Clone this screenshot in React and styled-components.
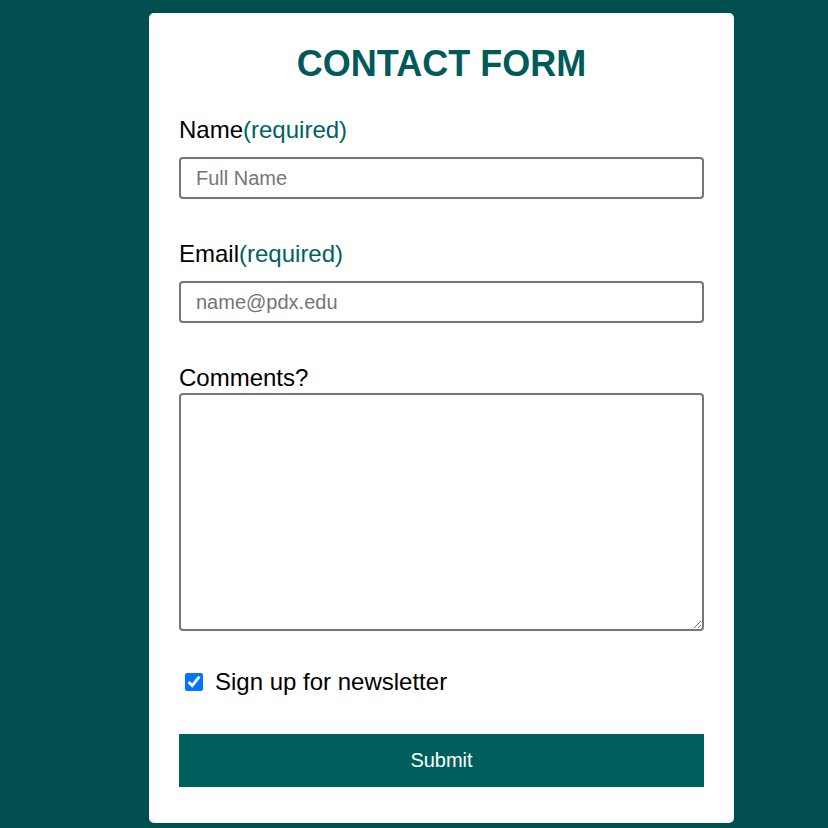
import React from 'react'
import styled, { createGlobalStyle } from 'styled-components'

const GlobalStyle = createGlobalStyle`
  html, body {
    margin: 0;
    padding: 0;
    background: #004f4f;
    font-family: "Liberation Sans", Arial, sans-serif;
  }
`

const Page = styled.div`
  min-height: 828px;
  padding: 13px 0 5px 149px;
  box-sizing: border-box;
`

const Card = styled.form`
  width: 585px;
  box-sizing: border-box;
  background: #fff;
  border-radius: 5px;
  padding: 30px 30px 36px;
  display: flex;
  flex-direction: column;
`

const Title = styled.h1`
  margin: 0 0 31px;
  text-align: center;
  font-size: 36px;
  font-weight: bold;
  color: #005a5a;
  line-height: normal;
`

const Field = styled.div`
  display: flex;
  flex-direction: column;
  margin-bottom: ${(p) => p.gap || 0}px;
`

const Label = styled.label`
  font-size: 24px;
  color: #000;
  line-height: normal;
  margin-bottom: ${(p) => (p.tight ? 1 : 13)}px;
`

const Required = styled.span`
  color: #006262;
`

const Input = styled.input`
  height: 42px;
  box-sizing: border-box;
  border: 2px solid #767676;
  border-radius: 4px;
  padding: 0 15px;
  font-family: inherit;
  font-size: 20px;
  color: #000;

  &::placeholder {
    color: #757575;
  }
`

const TextArea = styled.textarea`
  height: 238px;
  box-sizing: border-box;
  border: 2px solid #767676;
  border-radius: 4px;
  padding: 8px 15px;
  font-family: inherit;
  font-size: 20px;
  margin: 0;
`

const CheckRow = styled.label`
  display: flex;
  align-items: center;
  font-size: 24px;
  line-height: normal;
  margin-bottom: 38px;
`

const Check = styled.input`
  width: 18px;
  height: 18px;
  margin: 0 12px 0 6px;
`

const Submit = styled.button`
  height: 53px;
  border: none;
  background: #005f5c;
  color: #fff;
  font-family: inherit;
  font-size: 20px;
  cursor: pointer;
`

export default function App() {
  return (
    <Page>
      <GlobalStyle />
      <Card onSubmit={(e) => e.preventDefault()}>
        <Title>CONTACT FORM</Title>
        <Field gap={41}>
          <Label htmlFor="name">
            Name<Required>(required)</Required>
          </Label>
          <Input id="name" type="text" placeholder="Full Name" />
        </Field>
        <Field gap={41}>
          <Label htmlFor="email">
            Email<Required>(required)</Required>
          </Label>
          <Input id="email" type="email" placeholder="name@pdx.edu" />
        </Field>
        <Field gap={37}>
          <Label htmlFor="comments" tight>
            Comments?
          </Label>
          <TextArea id="comments" />
        </Field>
        <CheckRow>
          <Check type="checkbox" defaultChecked />
          Sign up for newsletter
        </CheckRow>
        <Submit type="submit">Submit</Submit>
      </Card>
    </Page>
  )
}
